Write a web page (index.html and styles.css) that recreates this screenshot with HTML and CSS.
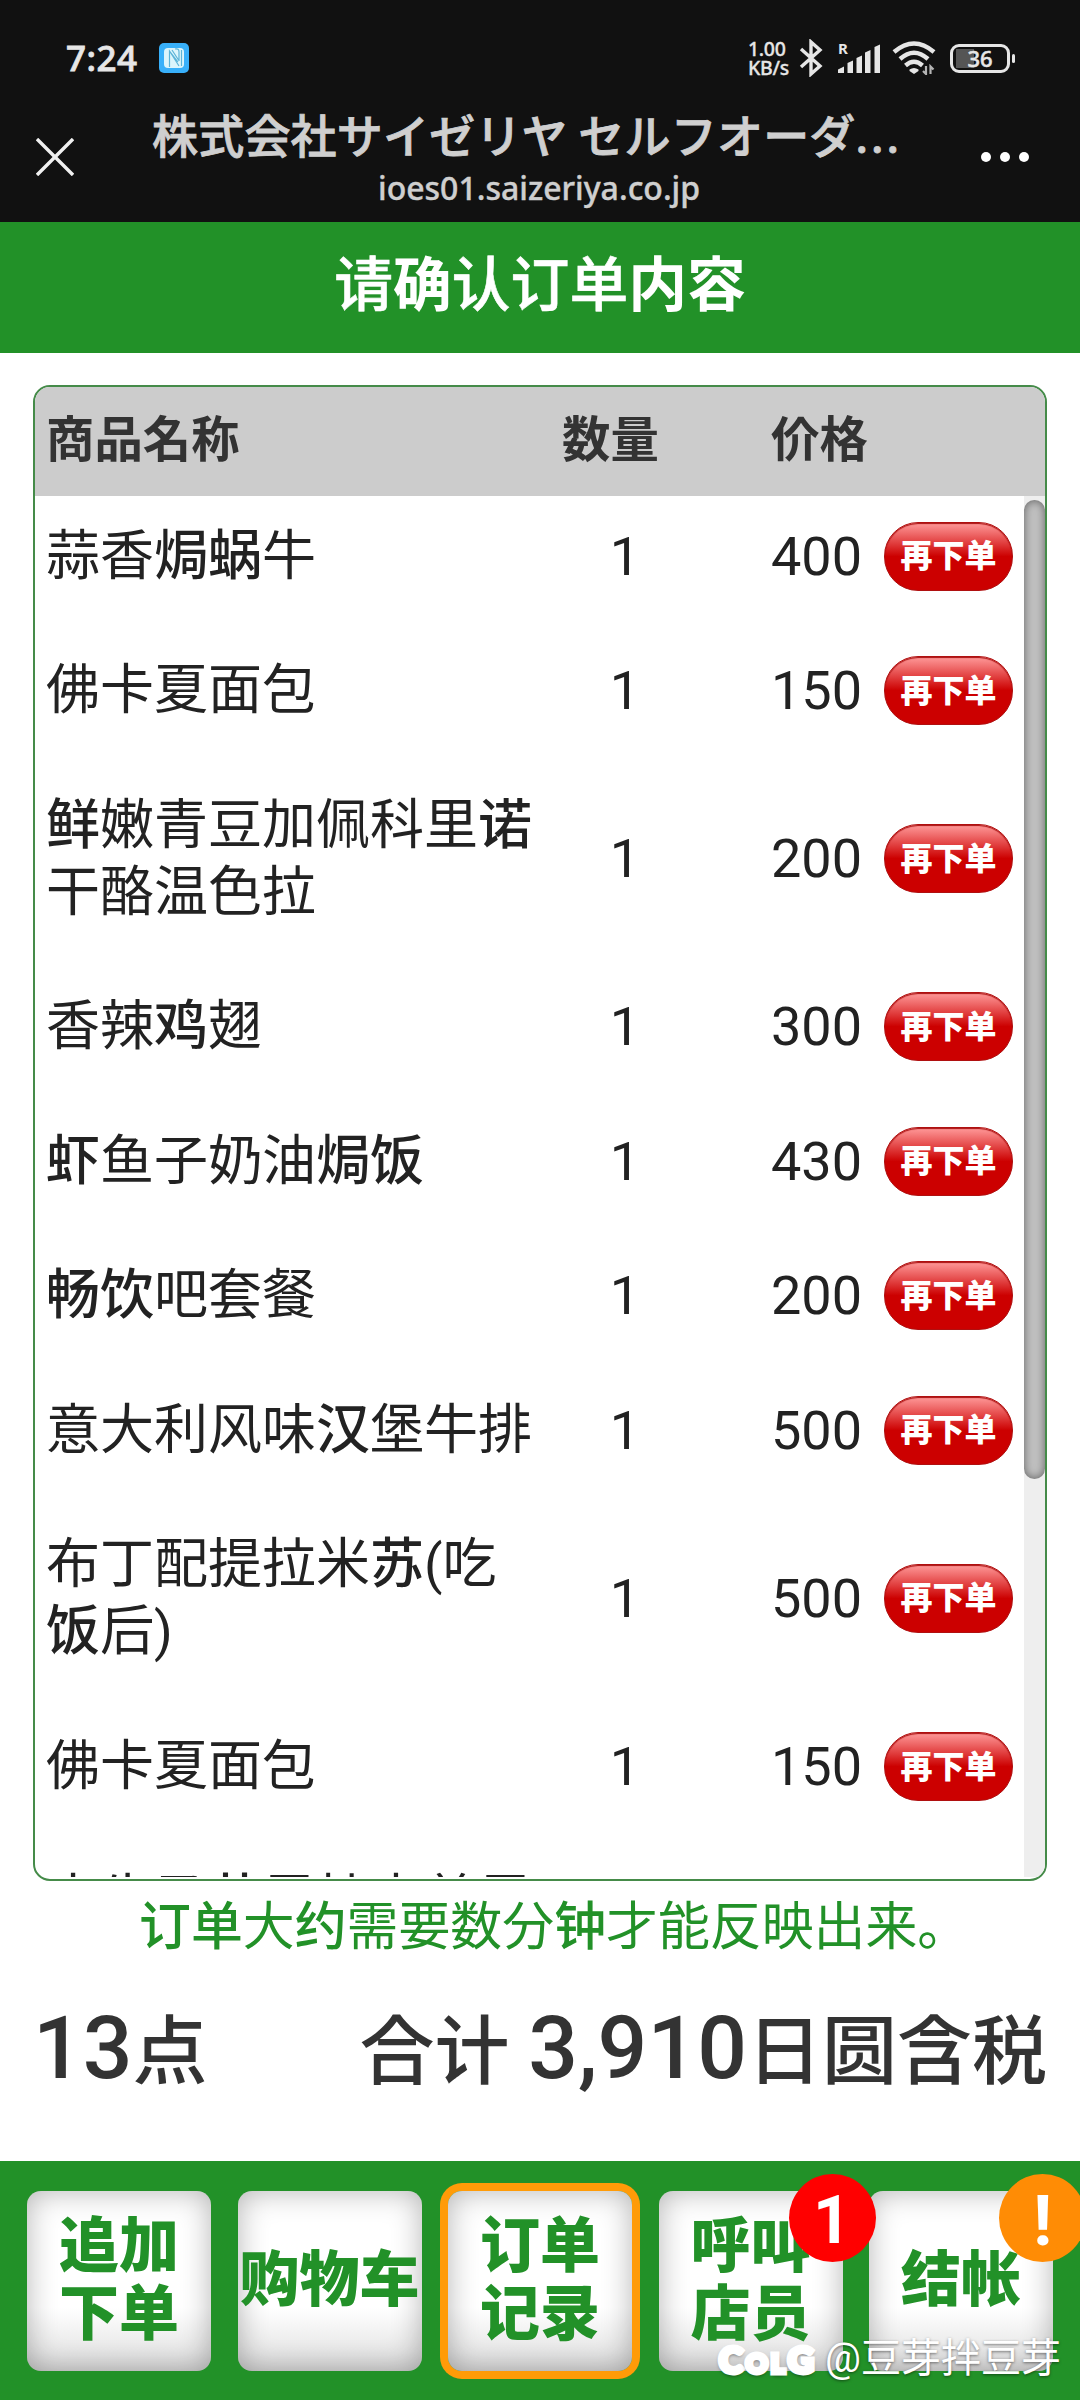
FILE: index.html
```html
<!DOCTYPE html>
<html lang="ja">
<head>
    <meta charset="UTF-8">
    <meta name="viewport" content="width=device-width, initial-scale=1.0">
    <title>セルフオーダー</title>
    <link rel="stylesheet" href="styles.css">
</head>
<body>
    <header class="browser">
        <div class="status-bar">
            <span class="clock">7:24</span>
            <svg class="nfc" width="30" height="30" viewBox="0 0 30 30">
                <rect width="30" height="30" rx="5" fill="#38b0fa"/>
                <rect x="5" y="5" width="20" height="20" rx="4" fill="#dcf5fc"/>
                <path d="M10.500 24V8L20 23M13 7L19.500 17M16 6Q20 5 20 9V18M10.500 8L19 19M22.500 7V23" fill="none" stroke="#5cb4d8" stroke-width="1.200"/>
            </svg>
            <span class="net-speed">1.00<br>KB/s</span>
            <svg class="bluetooth" width="24" height="38" viewBox="0 0 24 38">
                <path d="M2 10L21 27L12 35V3L21 11L2 28" fill="none" stroke="#e6e6e6" stroke-width="3.400"/>
            </svg>
            <svg class="signal" width="44" height="32" viewBox="0 0 44 32">
                <g fill="#e6e6e6">
                    <path d="M0 31v-3.500l6-3v6.500zM9.500 31V21l5.500-2.500v12.500zM18.500 31V16l5.500-2.500v17.500zM27 31V10.500l5.500-2.500v23zM36.500 31V5l5.500-2.500v28.500z"/>
                    <text x="0" y="12" class="roaming">R</text>
                </g>
            </svg>
            <svg class="wifi" width="44" height="34" viewBox="0 0 44 34">
                <g fill="none" stroke="#e6e6e6" stroke-width="4.400">
                    <path d="M2 11Q22 -6 42 11M8 18Q22 5.500 36 18M13.500 24.500Q22 17 30.500 24.500"/>
                </g>
                <path d="M17.500 28.500Q22 25.500 26.500 28.500V30L22 33L17.500 30Z" fill="#e6e6e6"/>
                <path d="M34 25V33L31 30M38.500 33V25.500L41.500 28.500" fill="none" stroke="#b5b5b5" stroke-width="2.200"/>
            </svg>
            <div class="battery"><span>36</span></div>
        </div>
        <div class="title-bar">
            <svg class="close" width="38" height="38" viewBox="0 0 38 38">
                <path d="M1 1L37 37M37 1L1 37" stroke="#f0f0f0" stroke-width="3.400"/>
            </svg>
            <div class="page-info">
                <div class="page-title">株式会社サイゼリヤ セルフオーダ<span>...</span></div>
                <div class="page-url">ioes01.saizeriya.co.jp</div>
            </div>
            <div class="more"><i></i><i></i><i></i></div>
        </div>
    </header>

    <h1 class="heading"><span class="sc">请</span>确<span class="sc">认订单</span>内容</h1>

    <main class="content">
        <div class="order-table">
            <div class="table-head">
                <span class="name">商品名称</span>
                <span class="count">数量</span>
                <span class="price">价格</span>
            </div>
            <div class="table-body">
                <div class="rows">
                    <div class="row">
                        <span class="name">蒜香<b>焗蜗</b>牛</span>
                        <span class="count">1</span>
                        <span class="price">400</span>
                        <button class="reorder">再下单</button>
                    </div>
                    <div class="row">
                        <span class="name">佛卡夏面包</span>
                        <span class="count">1</span>
                        <span class="price">150</span>
                        <button class="reorder">再下单</button>
                    </div>
                    <div class="row">
                        <span class="name"><b>鲜</b>嫩青豆加佩科里<b>诺</b><br>干酪温色拉</span>
                        <span class="count">1</span>
                        <span class="price">200</span>
                        <button class="reorder">再下单</button>
                    </div>
                    <div class="row">
                        <span class="name">香辣<b>鸡</b>翅</span>
                        <span class="count">1</span>
                        <span class="price">300</span>
                        <button class="reorder">再下单</button>
                    </div>
                    <div class="row">
                        <span class="name"><b>虾</b>鱼子奶油<b>焗饭</b></span>
                        <span class="count">1</span>
                        <span class="price">430</span>
                        <button class="reorder">再下单</button>
                    </div>
                    <div class="row">
                        <span class="name"><b>畅饮</b>吧套餐</span>
                        <span class="count">1</span>
                        <span class="price">200</span>
                        <button class="reorder">再下单</button>
                    </div>
                    <div class="row">
                        <span class="name">意大利风味<b>汉</b>堡牛排</span>
                        <span class="count">1</span>
                        <span class="price">500</span>
                        <button class="reorder">再下单</button>
                    </div>
                    <div class="row">
                        <span class="name">布丁配提拉米<b>苏</b>(吃<br><b>饭</b>后)</span>
                        <span class="count">1</span>
                        <span class="price">500</span>
                        <button class="reorder">再下单</button>
                    </div>
                    <div class="row">
                        <span class="name">佛卡夏面包</span>
                        <span class="count">1</span>
                        <span class="price">150</span>
                        <button class="reorder">再下单</button>
                    </div>
                    <div class="row">
                        <span class="name">水牛<b>马苏</b>里拉卡普里</span>
                    </div>
                </div>
                <div class="scrollbar"><div class="thumb"></div></div>
            </div>
        </div>
        <p class="notice"><b>订单</b>大<b>约</b>需要数分<b>钟</b>才能反映出来。</p>
        <div class="total">
            <div><span class="num">13</span>点</div>
            <div>合计 <span class="num">3,910</span>日圆含税</div>
        </div>
    </main>

    <nav class="nav">
        <button class="nav-button">追加<br>下单</button>
        <button class="nav-button">购物车</button>
        <button class="nav-button active">订单<br>记录</button>
        <button class="nav-button has-badge">呼叫<br>店员<span class="badge">1</span></button>
        <button class="nav-button">结帐<span class="badge alert">!</span></button>
        <div class="watermark"><span class="brand">C<small>OL</small>G</span>@豆芽拌豆芽</div>
    </nav>
</body>
</html>
```

FILE: styles.css
```css
* {
    box-sizing: border-box;
}

body {
    margin: 0;
    width: 1080px;
    height: 2400px;
    display: flex;
    flex-direction: column;
    overflow: hidden;
    background-color: #fff;
    color: #222;
    font-family: Roboto, "Noto Sans CJK SC", sans-serif;
}

button {
    border: none;
    padding: 0;
    font-family: inherit;
}

/* Phone status bar and browser title */
.browser {
    height: 222px;
    background-color: #111;
    color: #e6e6e6;
}

.status-bar {
    display: flex;
    align-items: center;
    height: 78px;
    padding: 38px 0 0 66px;
}

.clock {
    width: 93px;
    margin-top: -1px;
    font: 500 35px "Noto Sans", sans-serif;
    letter-spacing: 0.500px;
    -webkit-text-stroke: 0.800px #e6e6e6;
}

.net-speed {
    margin-left: 559px;
    width: 50px;
    font: 500 19.500px/19px "Noto Sans", sans-serif;
    letter-spacing: -0.300px;
    -webkit-text-stroke: 0.300px #e6e6e6;
    white-space: nowrap;
}

.bluetooth {
    margin-left: 1px;
}

.signal {
    margin-left: 15px;
}

.roaming {
    font: bold 15px "Noto Sans", sans-serif;
}

.wifi {
    margin-left: 10px;
}

.battery {
    position: relative;
    width: 60px;
    height: 29px;
    margin-left: 14px;
    border: 3px solid #e6e6e6;
    border-radius: 9px;
    background: linear-gradient(#555, #555) 3px 2px / 18px 19px no-repeat;
    font: 500 22px/23px "Noto Sans", sans-serif;
    -webkit-text-stroke: 0.500px #e6e6e6;
    text-align: center;
}

.battery::after {
    content: "";
    position: absolute;
    right: -8px;
    top: 7px;
    width: 3px;
    height: 9px;
    border-radius: 2px;
    background-color: #e6e6e6;
}

.title-bar {
    display: flex;
    height: 144px;
    color: #cfcfcf;
}

.close {
    margin: 60px 0 0 36px;
}

.page-info {
    width: 774px;
    margin-left: 78px;
    padding-top: 24px;
    white-space: nowrap;
}

.page-title {
    font: 500 46px/62px "Noto Sans CJK JP", sans-serif;
    letter-spacing: 0.200px;
    -webkit-text-stroke: 0.800px #cfcfcf;
}

.page-title span {
    font-family: "Noto Sans", sans-serif;
    letter-spacing: 3px;
}

.page-url {
    font: 500 32px/44px "Noto Sans", sans-serif;
    -webkit-text-stroke: 0.400px #cfcfcf;
    padding-left: 226px;
}

.more {
    display: flex;
    gap: 9px;
    margin: 74px 0 0 55px;
}

.more i {
    width: 10px;
    height: 10px;
    border-radius: 50%;
    background-color: #fff;
}

/* Page heading */
.heading {
    margin: 0;
    height: 131px;
    background-color: #229128;
    color: #fff;
    font-size: 58.800px;
    line-height: 128px;
    text-align: center;
}

.heading .sc {
    font-weight: 500;
    -webkit-text-stroke: 0.600px #fff;
}

.content {
    height: 1808px;
    padding: 32px 33px 0;
}

.order-table {
    height: 1496px;
    border: 2px solid #458b49;
    border-radius: 17px;
    overflow: hidden;
}

.table-head {
    display: flex;
    height: 109px;
    padding-left: 11px;
    background-color: #ccc;
    color: #333;
    font-size: 48.400px;
    line-height: 107px;
    font-weight: bold;
}

.table-body {
    display: flex;
    height: 1381px;
    overflow: hidden;
}

.rows {
    width: 989px;
    padding-left: 11px;
}

.row {
    display: flex;
    align-items: center;
    padding: 26.500px 0 40.800px;
    font-size: 54px;
    line-height: 67.200px;
}

.name {
    width: 498px;
    white-space: nowrap;
}

.count {
    width: 162px;
    text-align: center;
}

.price {
    width: 156px;
    text-align: right;
}

.table-head .name {
    width: 496px;
}

.table-head .count {
    width: 208px;
    padding-left: 20px;
    text-align: left;
}

.table-head .price {
    width: auto;
    padding-left: 21px;
}

.row b,
.notice b {
    font-weight: 500;
}

.reorder {
    width: 129px;
    height: 69px;
    margin: -1px 0 -1px 22px;
    border: 1px solid #b01010;
    border-radius: 34px;
    background: linear-gradient(#ff9a9a, #c00 50%);
    box-shadow: inset 0 1px 1px #a11;
    color: #fff;
    font-size: 32px;
    font-weight: 900;
    line-height: 64px;
}

.scrollbar {
    width: 21px;
    padding-top: 4px;
    background-color: #eee;
}

.thumb {
    height: 979px;
    border-radius: 11px;
    background-color: #c0c0c0;
    box-shadow: inset 0 0 10px rgba(0, 0, 0, 0.5);
}

.notice {
    margin: 9px 0 0 106px;
    color: #229128;
    font-size: 51.900px;
    line-height: 76px;
    white-space: nowrap;
}

.total {
    display: flex;
    justify-content: space-between;
    margin-top: 22px;
    color: #333;
    font-size: 75px;
    font-weight: 500;
    line-height: 120px;
}

.num {
    font-size: 87.600px;
}

/* Bottom navigation */
.nav {
    position: relative;
    display: flex;
    gap: 26.500px;
    height: 239px;
    padding: 30px 27px 0;
    background-color: #229128;
}

.nav-button {
    position: relative;
    width: 184px;
    height: 180px;
    flex: none;
    padding-bottom: 1px;
    border-radius: 14px;
    background: linear-gradient(#fff 65%, #ddd);
    box-shadow: inset 0 0 30px rgba(0, 0, 0, 0.3);
    color: #229128;
    font-size: 60px;
    font-weight: 900;
    line-height: 68px;
    white-space: nowrap;
}

.nav-button.active {
    box-shadow: inset 0 0 30px rgba(0, 0, 0, 0.3), 0 0 0 8px #ff9b08;
}

.nav-button.has-badge {
    z-index: 1;
}

.badge {
    position: absolute;
    top: -17px;
    right: -33px;
    width: 87px;
    height: 88px;
    border-radius: 50%;
    background-color: #f00;
    color: #fff;
    font-size: 66px;
    font-weight: 700;
    line-height: 94px;
    text-align: center;
}

.badge.alert {
    background-color: #ff8c05;
    font-size: 71px;
}

.watermark {
    position: absolute;
    z-index: 2;
    left: 717px;
    top: 165px;
    display: flex;
    align-items: center;
    color: #fff;
    font-size: 40px;
    font-weight: 400;
    line-height: 58px;
    text-shadow: 0 1px 3px rgba(0, 0, 0, 0.5);
    white-space: nowrap;
}

.brand {
    width: 108px;
    padding: 4px 0 0 2px;
    font-family: Lato, sans-serif;
    font-size: 36px;
    font-weight: 900;
    letter-spacing: 3px;
    text-shadow: 0 2px 4px rgba(0, 0, 0, 0.8);
    -webkit-text-stroke: 5px #fff;
}

.brand small {
    font-size: 27px;
}
```
